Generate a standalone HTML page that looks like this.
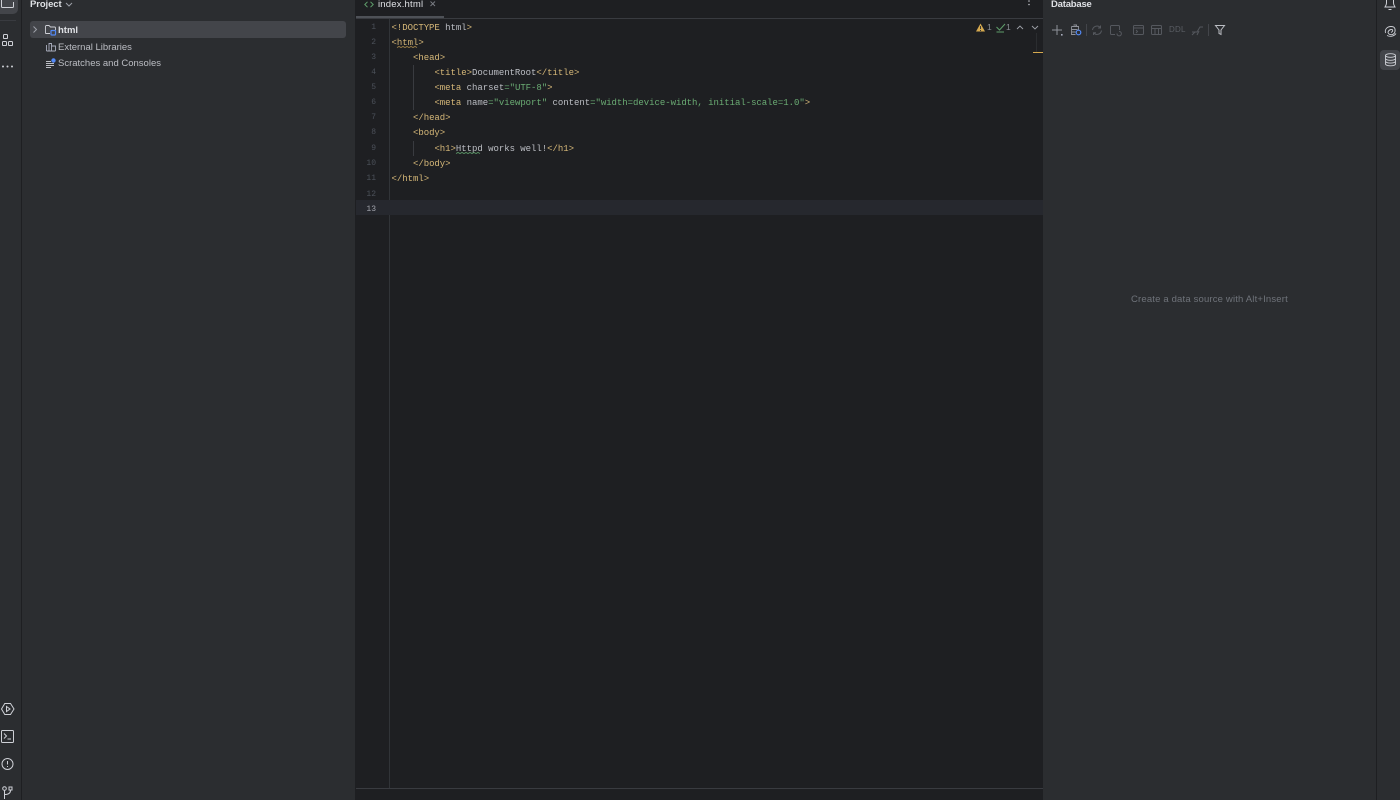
<!DOCTYPE html>
<html lang="en">
<head>
<meta charset="utf-8">
<title>index.html</title>
<style>
html,body{margin:0;padding:0;width:1400px;height:800px;overflow:hidden;background:#1e1f22}
*{box-sizing:border-box}
.a{position:absolute}
body{font-family:"Liberation Sans",sans-serif;color:#bcbec4}
.t{position:absolute;white-space:nowrap;font-size:9.5px;line-height:12px}
.ln{position:absolute;left:356px;width:20px;text-align:right;font:8px/12px "Liberation Mono",monospace;color:#4b5059}
.c{position:absolute;left:391.5px;white-space:pre;font:9px/12px "Liberation Mono",monospace;letter-spacing:-.035px;color:#bcbec4}
.g{color:#d5b778}.s{color:#6aab73}
svg{position:absolute;overflow:visible;fill:none}
</style>
</head>
<body>
<!-- panels -->
<div class="a" style="left:0;top:0;width:355px;height:800px;background:#2b2d30"></div>
<div class="a" style="left:21px;top:0;width:1px;height:800px;background:#1e1f22"></div>
<div class="a" style="left:355px;top:0;width:1px;height:800px;background:#1e1f22"></div>
<div class="a" style="left:1043px;top:0;width:357px;height:800px;background:#2b2d30"></div>
<div class="a" style="left:1376px;top:0;width:1px;height:800px;background:#1e1f22"></div>

<!-- left stripe -->
<div class="a" style="left:-6px;top:-10px;width:24px;height:24px;border-radius:5px;background:#43454a"></div>
<svg style="left:0;top:0" width="20" height="12" stroke="#ced0d6" stroke-width="1"><path d="M1.5 -3V6.5a1 1 0 0 0 1 1H12.5a1 1 0 0 0 1-1V2"/></svg>
<div class="a" style="left:0;top:20px;width:16px;height:1px;background:#393b40"></div>
<svg style="left:0;top:32px" width="16" height="16" stroke="#ced0d6" stroke-width="1"><rect x="3.5" y="2.5" width="4" height="4" rx=".8"/><rect x="2.5" y="9.5" width="4" height="4" rx=".8"/><rect x="8.5" y="9.5" width="4" height="4" rx=".8"/></svg>
<svg style="left:0;top:60px;fill:#ced0d6" width="16" height="12"><circle cx="3" cy="6.5" r="1"/><circle cx="7.5" cy="6.5" r="1"/><circle cx="12" cy="6.5" r="1"/></svg>
<svg style="left:0;top:701px" width="16" height="16" stroke="#ced0d6" stroke-width="1"><path d="M4.8 2.5H10.5L14 8l-3.5 5.5H4.8L1.5 8z"/><path d="M6.5 5.5 10 8l-3.5 2.5z"/></svg>
<svg style="left:0;top:729px" width="16" height="16" stroke="#ced0d6" stroke-width="1"><rect x="1.5" y="1.5" width="12" height="12" rx="1"/><path d="M4 4.5 6.5 7 4 9.5M7.5 10H11"/></svg>
<svg style="left:0;top:756px" width="16" height="16" stroke="#ced0d6" stroke-width="1"><circle cx="7.5" cy="8" r="5.5"/><path d="M7.5 5v3.5M7.5 10v1"/></svg>
<svg style="left:0;top:784px" width="16" height="16" stroke="#ced0d6" stroke-width="1"><circle cx="4.5" cy="4.5" r="1.8"/><rect x="9" y="3" width="3" height="3"/><path d="M4.5 6.5V15M4.5 10.5C7.5 10.5 10.5 9.5 10.5 6.2"/></svg>

<!-- project panel -->
<div class="t" style="left:30px;top:-1px;font-weight:700;color:#dfe1e5;font-size:9.5px;letter-spacing:-.1px">Project</div>
<svg style="left:65px;top:2px" width="8" height="6" stroke="#9da0a8" stroke-width="1"><path d="M1 1 4 4 7 1"/></svg>
<div class="a" style="left:30px;top:21px;width:316px;height:17px;border-radius:3px;background:#43454a"></div>
<svg style="left:32px;top:26px" width="6" height="8" stroke="#9da0a8" stroke-width="1"><path d="M1.5 .5 4.5 3.5 1.5 6.5"/></svg>
<svg style="left:45px;top:25px" width="12" height="11" stroke="#ced0d6" stroke-width=".9"><path d="M.5 8.5V1.5a1 1 0 0 1 1-1H4L5.5 2H9.5a1 1 0 0 1 1 1V5M.5 8.5H5"/><rect x="6" y="5.5" width="4.5" height="4.5" rx=".6" stroke="#548af7" stroke-width="1.2"/></svg>
<div class="t" style="left:58px;top:24.500px;font-weight:700;color:#dfe1e5">html</div>
<svg style="left:46px;top:42px" width="12" height="10" stroke="#a8adbd" stroke-width=".9"><path d="M.5 3V9M.5 9H9.5M3 9V1.5H5.5V9M5.5 4H9.5V9"/></svg>
<div class="t" style="left:58px;top:41.500px;color:#bcbec4">External Libraries</div>
<svg style="left:46px;top:58px" width="11" height="10" stroke="#bcbec4" stroke-width=".9"><path d="M0 3.5H5M0 5.5H8M0 7.5H8M0 9.5H5"/><circle cx="7.5" cy="2.5" r="2.2" fill="#548af7" stroke="none"/></svg>
<div class="t" style="left:58px;top:58px;color:#bcbec4">Scratches and Consoles</div>

<!-- tab -->
<svg style="left:364px;top:1px" width="11" height="8" stroke="#5f9e6b" stroke-width="1"><path d="M3.5 .8 .8 3.5 3.5 6.2M6.5 .8 9.2 3.5 6.5 6.2"/></svg>
<div class="t" style="left:378px;top:-1px;color:#dfe1e5;letter-spacing:.2px">index.html</div>
<svg style="left:430px;top:1px" width="6" height="6" stroke="#7a7e85" stroke-width=".9"><path d="M.5 .5 5 5M5 .5 .5 5"/></svg>
<div class="a" style="left:356px;top:18px;width:687px;height:1px;background:#393b40"></div>
<div class="a" style="left:356px;top:16px;width:88px;height:2px;background:#4e5157"></div>
<svg style="left:1027px;top:0;fill:#bcbec4" width="4" height="8"><circle cx="2" cy="1" r=".8"/><circle cx="2" cy="4.5" r=".8"/></svg>

<!-- gutter -->
<div class="a" style="left:389px;top:19px;width:1px;height:769px;background:#313438"></div>
<div class="a" style="left:356px;top:200px;width:687px;height:15px;background:#26282e"></div>
<div class="a" style="left:356px;top:788px;width:687px;height:1px;background:#393b40"></div>
<div class="a" style="left:413px;top:65px;width:1px;height:45px;background:#393b40"></div>
<div class="a" style="left:413px;top:141px;width:1px;height:15px;background:#393b40"></div>

<div class="ln" style="top:22px">1</div>
<div class="ln" style="top:37px">2</div>
<div class="ln" style="top:52px">3</div>
<div class="ln" style="top:67px">4</div>
<div class="ln" style="top:82px">5</div>
<div class="ln" style="top:97px">6</div>
<div class="ln" style="top:112px">7</div>
<div class="ln" style="top:127px">8</div>
<div class="ln" style="top:143px">9</div>
<div class="ln" style="top:158px">10</div>
<div class="ln" style="top:173px">11</div>
<div class="ln" style="top:189px">12</div>
<div class="ln" style="top:204px;color:#a1a3ab">13</div>

<!-- code -->
<div class="c" style="top:22px"><span class="g">&lt;!DOCTYPE</span> html<span class="g">&gt;</span></div>
<div class="c" style="top:37px"><span class="g">&lt;html&gt;</span></div>
<div class="c" style="top:52px">    <span class="g">&lt;head&gt;</span></div>
<div class="c" style="top:67px">        <span class="g">&lt;title&gt;</span>DocumentRoot<span class="g">&lt;/title&gt;</span></div>
<div class="c" style="top:82px">        <span class="g">&lt;meta</span> charset<span class="s">="UTF-8"</span><span class="g">&gt;</span></div>
<div class="c" style="top:97px">        <span class="g">&lt;meta</span> name<span class="s">="viewport"</span> content<span class="s">="width=device-width, initial-scale=1.0"</span><span class="g">&gt;</span></div>
<div class="c" style="top:112px">    <span class="g">&lt;/head&gt;</span></div>
<div class="c" style="top:127px">    <span class="g">&lt;body&gt;</span></div>
<div class="c" style="top:143px">        <span class="g">&lt;h1&gt;</span>Httpd works well!<span class="g">&lt;/h1&gt;</span></div>
<div class="c" style="top:158px">    <span class="g">&lt;/body&gt;</span></div>
<div class="c" style="top:173px"><span class="g">&lt;/html&gt;</span></div>
<svg style="left:397px;top:46px" width="22" height="3" stroke="#a8884a" stroke-width=".8"><path d="M0 1.5l2-1 2 1 2-1 2 1 2-1 2 1 2-1 2 1 2-1 2 1"/></svg>
<svg style="left:456px;top:152px" width="26" height="3" stroke="#5f9e6b" stroke-width=".8"><path d="M0 1.5l2-1 2 1 2-1 2 1 2-1 2 1 2-1 2 1 2-1 2 1 2-1 2 1"/></svg>

<!-- inspections -->
<svg style="left:976px;top:23px" width="10" height="9"><path d="M4.5 .5 9 8.5H0z" fill="#d5a94f"/><path d="M4.5 3v3M4.5 7v1" stroke="#2b2d30" stroke-width=".9"/></svg>
<div class="t" style="left:987px;top:21px;font-size:8.5px;color:#8a8d94">1</div>
<svg style="left:996px;top:23px" width="10" height="10" stroke="#5f9e6b" stroke-width="1"><path d="M.5 4 3.5 7 9 1M.5 9H8"/></svg>
<div class="t" style="left:1006px;top:21px;font-size:8.5px;color:#8a8d94">1</div>
<svg style="left:1016px;top:25px" width="8" height="5" stroke="#9da0a8" stroke-width=".9"><path d="M1 4 4 1 7 4"/></svg>
<svg style="left:1031px;top:25px" width="8" height="5" stroke="#9da0a8" stroke-width=".9"><path d="M1 1 4 4 7 1"/></svg>
<div class="a" style="left:1033px;top:52px;width:10px;height:1px;background:#d5a94f"></div>
<div class="a" style="left:1036px;top:33px;width:1px;height:19px;background:#2b2d30"></div>

<!-- database panel -->
<div class="t" style="left:1051px;top:-1px;font-weight:700;color:#dfe1e5;letter-spacing:-.2px">Database</div>
<svg style="left:1051px;top:24px" width="14" height="14" stroke="#8f929a" stroke-width="1"><path d="M6 1V11M1 6H11"/><rect x="10" y="10" width="1.6" height="1.6" fill="#a8adbd" stroke="none"/></svg>
<svg style="left:1070px;top:24px" width="13" height="13" stroke="#8f929a" stroke-width=".9"><path d="M1.5 2.5h7v3.5M1.5 2.5v8h4M1.5 5.5h6M1.5 8h4M3.5 1h3v1.500"/><circle cx="8.5" cy="8.5" r="2.3" stroke="#548af7" stroke-width="1.2"/></svg>
<div class="a" style="left:1086px;top:24px;width:1px;height:12px;background:#43454a"></div>
<svg style="left:1091px;top:24px" width="13" height="13" stroke="#55585e" stroke-width="1"><path d="M1.5 6a4.5 4.5 0 0 1 8-2.200M10.500 6.500a4.500 4.500 0 0 1-8 2.200M9.500 1.500v2.500H7M2.500 11V8.700H5"/></svg>
<svg style="left:1109px;top:24px" width="14" height="13" stroke="#55585e" stroke-width="1"><path d="M6 10.500H2.500a1 1 0 0 1-1-1v-7a1 1 0 0 1 1-1h7a1 1 0 0 1 1 1V6M8 9.500a2.200 2.200 0 1 0 2-2"/></svg>
<svg style="left:1132px;top:24px" width="13" height="13" stroke="#55585e" stroke-width="1"><rect x="1.500" y="1.500" width="10" height="9" rx="1"/><path d="M1.500 4H11.500M4 6l1.500 1.500L4 9"/></svg>
<svg style="left:1150px;top:24px" width="13" height="13" stroke="#55585e" stroke-width="1"><rect x="1.500" y="1.500" width="10" height="9" rx="1"/><path d="M1.500 4.500H11.500M5 4.500v6M8.500 4.500v6"/></svg>
<div class="t" style="left:1169px;top:24px;font-size:8px;color:#5a5d63;letter-spacing:.2px">DDL</div>
<svg style="left:1191px;top:24px" width="13" height="13" stroke="#55585e" stroke-width="1"><path d="M1 8H6L9 3H12M1 11 4 8M8 7 6 11"/></svg>
<div class="a" style="left:1208px;top:24px;width:1px;height:12px;background:#43454a"></div>
<svg style="left:1214px;top:24px" width="12" height="12" stroke="#bcbec4" stroke-width="1"><path d="M1.500 1.500H10.500L7 6V10.500L5 9.500V6z"/></svg>
<div class="t" style="left:1131px;top:294px;color:#6f737a;letter-spacing:.17px">Create a data source with Alt+Insert</div>

<!-- right stripe -->
<svg style="left:1384px;top:0" width="13" height="11" stroke="#ced0d6" stroke-width="1"><path d="M2.500 -2V3C2.500 5 1.500 6 1 7H11C10.500 6 9.500 5 9.500 3V-2M4.500 9.500H7.500"/></svg>
<svg style="left:1384px;top:25px" width="13" height="13" stroke="#ced0d6" stroke-width=".9"><path d="M1.500 8C.5 4 3.500 1.500 7 1.500S11.500 3.500 11 6.500 7 10.500 5 9 4.500 5 7 4.500 9 6.500 7 7.500"/><path d="M3 10.500c3 1.500 7 1 9-2"/></svg>
<div class="a" style="left:1380px;top:50px;width:20px;height:20px;border-radius:4px;background:#43454a"></div>
<svg style="left:1384px;top:53px" width="13" height="14" stroke="#ced0d6" stroke-width=".9"><ellipse cx="6.500" cy="2.500" rx="5" ry="1.800"/><path d="M1.500 2.500V11c0 1 2.200 1.800 5 1.800s5-.8 5-1.800V2.500M1.500 5.500c0 1 2.200 1.800 5 1.800s5-.8 5-1.800M1.500 8.300c0 1 2.200 1.800 5 1.800s5-.8 5-1.800"/></svg>
</body>
</html>
